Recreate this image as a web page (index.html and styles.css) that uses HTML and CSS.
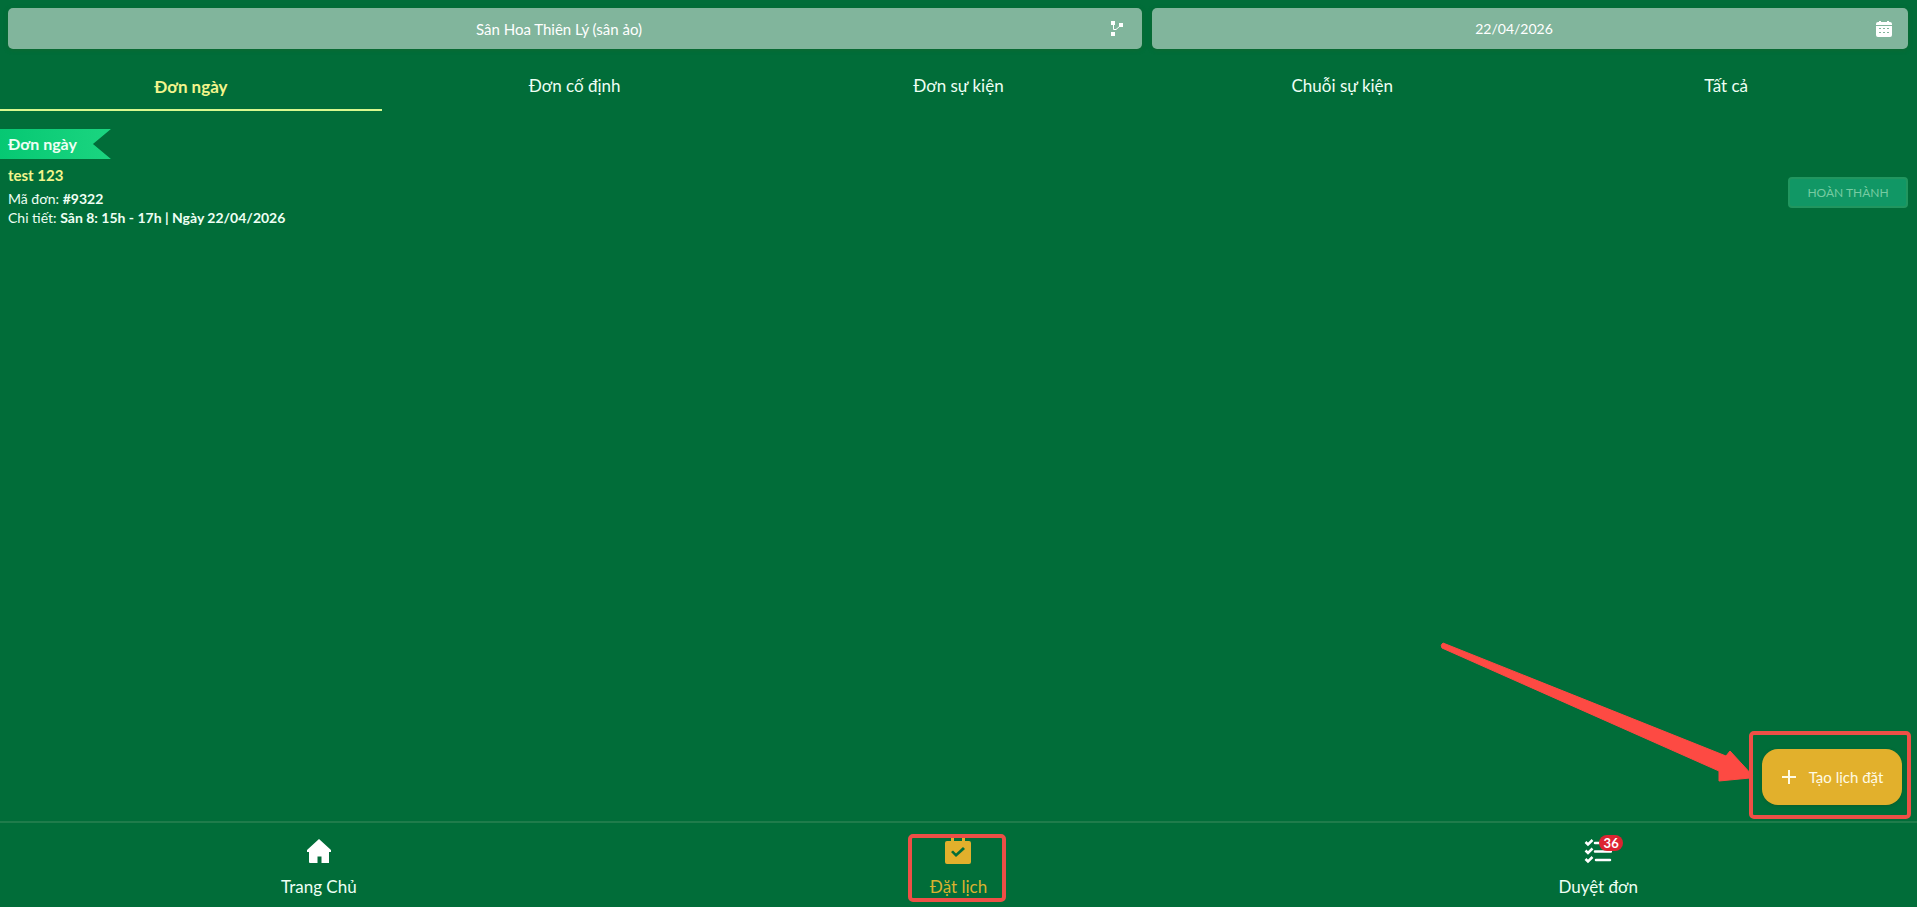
FILE: index.html
```html
<!DOCTYPE html>
<html lang="vi">
<head>
<meta charset="utf-8">
<meta name="viewport" content="width=device-width, initial-scale=1">
<title>Đặt lịch</title>
<link rel="stylesheet" href="styles.css">
</head>
<body>
<header class="filters">
  <button type="button" class="filter filter-court">
    <span>Sân Hoa Thiên Lý (sân ảo)</span>
    <svg class="filter-icon" width="18" height="18" viewBox="0 0 18 18" aria-hidden="true">
      <path d="M2 1h4v4H2zM10 3h4v4h-4zM2 12h4v4H2z" fill="currentColor"/>
      <path d="M4.500 5v4.500H7L11 6" fill="none" stroke="currentColor" stroke-width="1"/>
    </svg>
  </button>
  <button type="button" class="filter filter-date">
    <span>22/04/2026</span>
    <svg class="filter-icon" width="18" height="18" viewBox="0 0 18 18" aria-hidden="true">
      <path d="M3 2h1V1h2v1h6V1h2v1h1q2 0 2 2v1H1V4q0-2 2-2z" fill="currentColor"/>
      <path fill-rule="evenodd" d="M1 6h16v9q0 2-2 2H3q-2 0-2-2zM4 8v1h2V8zM8 8v1h2V8zM12 8v1h2V8zM4 12v1h2v-1zM8 12v1h2v-1zM12 12v1h2v-1z" fill="currentColor"/>
    </svg>
  </button>
</header>

<nav class="tabs" aria-label="Loại đơn">
  <button type="button" class="tab tab-active">Đơn ngày</button>
  <button type="button" class="tab">Đơn cố định</button>
  <button type="button" class="tab">Đơn sự kiện</button>
  <button type="button" class="tab">Chuỗi sự kiện</button>
  <button type="button" class="tab">Tất cả</button>
</nav>

<main class="orders">
  <article class="order">
    <div class="ribbon">Đơn ngày</div>
    <div class="order-body">
      <div class="order-info">
        <h2 class="order-name">test 123</h2>
        <p class="order-line">Mã đơn: <b>#9322</b></p>
        <p class="order-line">Chi tiết: <b>Sân 8: 15h - 17h | Ngày 22/04/2026</b></p>
      </div>
      <button type="button" class="done" disabled>HOÀN THÀNH</button>
    </div>
  </article>

  <svg class="arrow" width="314" height="144" viewBox="0 0 314 144" aria-hidden="true">
    <path d="M3 3L286 116L290 111L313 136L310 138L279 141L279 131L2 8Q0 5 3 3z" fill="#fd4a43" stroke="#fd4a43" stroke-width="1" stroke-linejoin="round"/>
  </svg>
  <div class="create-frame">
    <button type="button" class="create">
      <svg width="16" height="16" viewBox="0 0 16 16" aria-hidden="true"><path d="M8 1v14M1 8h14" stroke="currentColor" stroke-width="2"/></svg>
      Tạo lịch đặt
    </button>
  </div>
</main>

<nav class="bottom-nav" aria-label="Điều hướng chính">
  <a class="nav-item" href="#home">
    <svg width="28" height="28" viewBox="0 0 28 28" aria-hidden="true">
      <path d="M14 2L26 13V15H24V26H16.500V19.500H12.500V26H5Q4 26 4 25V15H2V13z" fill="#fff"/>
    </svg>
    Trang Chủ
  </a>
  <a class="nav-item nav-active" href="#booking" aria-current="page">
    <svg width="28" height="28" viewBox="0 0 28 28" aria-hidden="true">
      <path fill-rule="evenodd" d="M3 4H7V0H10V4H18V0H21V4H25Q27 4 27 6V25Q27 27 25 27H3Q1 27 1 25V6Q1 4 3 4zM7 15L12 20L21 12L19 10L12 16.500L9 13.500z" fill="#e2b02c"/>
    </svg>
    Đặt lịch
    <span class="nav-frame"></span>
  </a>
  <a class="nav-item" href="#approve">
    <span class="nav-icon">
      <svg width="28" height="28" viewBox="0 0 28 28" aria-hidden="true">
        <path d="M1.500 5L4 7.500L8.500 3M1.500 13.500L4 16L8.500 11.500M1.500 22L4 24.500L8.500 20" fill="none" stroke="#fff" stroke-width="2.500"/>
        <path d="M11 6H27M11 14.500H27M12 23H26" fill="none" stroke="#fff" stroke-width="2.500" stroke-linecap="round"/>
      </svg>
      <span class="badge">36</span>
    </span>
    Duyệt đơn
  </a>
</nav>
</body>
</html>
```
FILE: styles.css
```css
* {
  box-sizing: border-box;
}

body {
  margin: 0;
  min-height: 100vh;
  display: flex;
  flex-direction: column;
  background: #016d39;
  color: #eefff4;
  font-family: Lato, "Open Sans", sans-serif;
  font-size: 17px;
}

button {
  border: 0;
  background: none;
  color: inherit;
  font: inherit;
}

.filters {
  display: grid;
  grid-template-columns: 3fr 2fr;
  gap: 10px;
  padding: 8px 9px 0 8px;
}

.filter {
  position: relative;
  height: 41px;
  padding: 0 40px 0 8px;
  border-radius: 5px;
  background: #81b59c;
  box-shadow: 0 1px 4px #0f6830;
  font-size: 15px;
  color: #fff;
}

.filter-date {
  font-size: 14px;
}

.filter-icon {
  position: absolute;
  top: 12px;
  right: 15px;
}

.tabs {
  display: grid;
  grid-template-columns: repeat(5, 1fr);
  gap: 2px;
  padding-top: 12px;
}

.tab {
  height: 50px;
  padding: 0;
  border-bottom: 2px solid transparent;
}

.tab-active {
  padding: 2px 0 0;
  border-bottom-color: #d8f98f;
  color: #f3f58c;
  font-weight: 700;
}

.orders {
  position: relative;
  flex: 1;
  padding-top: 18px;
}

.ribbon {
  width: max-content;
  height: 30px;
  padding: 0 34px 0 8px;
  line-height: 30px;
  font-size: 16px;
  font-weight: 700;
  background: linear-gradient(90deg, #06c873, #1bd580);
  clip-path: polygon(0 0, 100% 0, calc(100% - 18px) 50%, 100% 100%, 0 100%);
}

.order-body {
  display: flex;
  align-items: center;
  justify-content: space-between;
  padding: 4px 9px 0 8px;
}

.order-name {
  margin: 0 0 2px;
  font-size: 15px;
  line-height: 24px;
  color: #f3f58c;
}

.order-line {
  margin: 0;
  font-size: 14px;
  line-height: 19px;
}

.done {
  width: 120px;
  height: 31px;
  margin-bottom: 6px;
  padding: 0;
  border: 2px solid #21965f;
  border-radius: 4px;
  background: #119765;
  color: #76cba2;
  font-size: 12px;
}

.arrow {
  position: absolute;
  right: 163px;
  bottom: 37px;
}

.create-frame {
  position: absolute;
  right: 6px;
  bottom: 2px;
  padding: 14px 5px 10px 9px;
  border: 4px solid #ee4f46;
  border-radius: 5px;
}

.create {
  display: flex;
  align-items: center;
  justify-content: center;
  gap: 12px;
  width: 140px;
  height: 56px;
  padding: 0;
  border-radius: 16px;
  background: #e2b02c;
  box-shadow: 0 1px 3px #0d5e2c;
  color: #fffbe5;
  font-size: 15px;
}

.bottom-nav {
  display: grid;
  grid-template-columns: repeat(3, 1fr);
  gap: 2px;
  height: 86px;
  border-top: 2px solid #1f7c4b;
}

.nav-item {
  position: relative;
  display: flex;
  flex-direction: column;
  align-items: center;
  gap: 12px;
  padding-top: 14px;
  color: inherit;
  line-height: 20px;
  text-decoration: none;
}

.nav-active {
  color: #d9b12f;
}

.nav-frame {
  position: absolute;
  top: 11px;
  left: calc(50% - 50px);
  width: 98px;
  height: 68px;
  border: 4px solid #ee4f46;
  border-radius: 5px;
}

.nav-icon {
  position: relative;
  height: 28px;
}

.badge {
  position: absolute;
  top: -2px;
  left: 15px;
  min-width: 24px;
  height: 16px;
  border-radius: 8px;
  background: #dc2431;
  color: #fff;
  font-size: 13px;
  font-weight: 700;
  line-height: 16px;
  text-align: center;
}
```
